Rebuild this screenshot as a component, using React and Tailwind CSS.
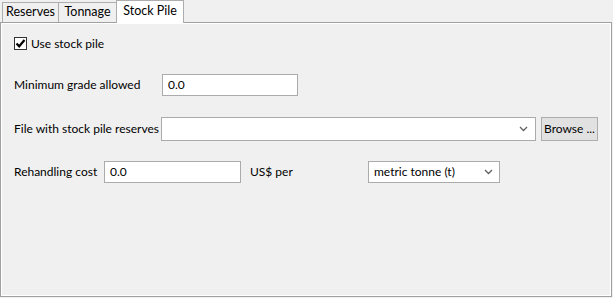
import React, { useState } from "react";

function Chevron() {
  return (
    <svg width="9" height="6" viewBox="0 0 9 6" className="shrink-0">
      <path d="M1 1 L4.5 4.5 L8 1" fill="none" stroke="#606060" strokeWidth="1.3" />
    </svg>
  );
}

function Tab({ label, active, className = "" }) {
  if (active) {
    return (
      <div
        className={`relative z-10 -mb-px flex h-[23px] shrink-0 items-center justify-center border border-b-0 border-[#adadad] bg-white pb-[2px] ${className}`}
      >
        {label}
      </div>
    );
  }
  return (
    <div
      className={`flex h-[20px] shrink-0 items-center justify-center border-t border-[#adadad] bg-[#f0f0f0] ${className}`}
    >
      {label}
    </div>
  );
}

export default function App() {
  const [useStock, setUseStock] = useState(true);

  return (
    <div
      className="h-[298px] w-[613px] overflow-hidden whitespace-nowrap bg-[#f0f0f0] text-[12px] text-black"
      style={{ fontFamily: 'Lato, "Noto Sans", sans-serif' }}
    >
      {/* Tabs */}
      <div className="flex h-[22px] items-end text-[12.5px]">
        <Tab label="Reserves" className="ml-[2px] w-[57px] border-l border-r" />
        <Tab label="Tonnage" className="w-[58px] border-r" />
        <Tab label="Stock Pile" active className="-ml-px w-[68px]" />
      </div>

      {/* Panel */}
      <div className="flex h-[275px] w-[612px] flex-col border border-[#a0a0a0] pl-[13px] shadow-[inset_1px_1px_0_#fff,inset_-1px_-1px_0_#fff]">
        {/* Use stock pile */}
        <div className="mt-[14px] flex h-[13px] items-center">
          <button
            onClick={() => setUseStock(!useStock)}
            className="flex h-[13px] w-[13px] shrink-0 items-center justify-center border border-[#333] bg-white"
          >
            {useStock && (
              <svg width="11" height="11" viewBox="0 0 11 11">
                <path d="M1.5 5.5 L4.2 8.3 L9.5 2" fill="none" stroke="#000" strokeWidth="2.2" />
              </svg>
            )}
          </button>
          <span className="ml-[4px] pt-px leading-none">Use stock pile</span>
        </div>

        {/* Minimum grade */}
        <div className="mt-[24px] flex h-[22px] items-center">
          <span className="w-[148px] shrink-0">Minimum grade allowed</span>
          <div className="flex h-[22px] w-[136px] shrink-0 items-center border border-[#ababab] bg-white pl-[5px]">
            0.0
          </div>
        </div>

        {/* File */}
        <div className="mt-[21px] flex h-[24px] items-center">
          <span className="w-[147px] shrink-0">File with stock pile reserves</span>
          <div className="flex h-[24px] w-[375px] shrink-0 items-center justify-end border border-[#ababab] bg-white pr-[7px]">
            <Chevron />
          </div>
          <button className="ml-[5px] flex h-[24px] w-[57px] shrink-0 items-center justify-center border border-[#adadad] bg-[#e1e1e1]">
            Browse ...
          </button>
        </div>

        {/* Rehandling */}
        <div className="mt-[20px] flex h-[22px] items-center">
          <span className="w-[90px] shrink-0">Rehandling cost</span>
          <div className="flex h-[22px] w-[137px] shrink-0 items-center border border-[#ababab] bg-white pl-[5px]">
            0.0
          </div>
          <span className="ml-[9px] w-[118px] shrink-0">US$ per</span>
          <div className="flex h-[22px] w-[132px] shrink-0 items-center justify-between border border-[#ababab] bg-white pl-[5px] pr-[6px]">
            <span>metric tonne (t)</span>
            <Chevron />
          </div>
        </div>
      </div>
    </div>
  );
}
